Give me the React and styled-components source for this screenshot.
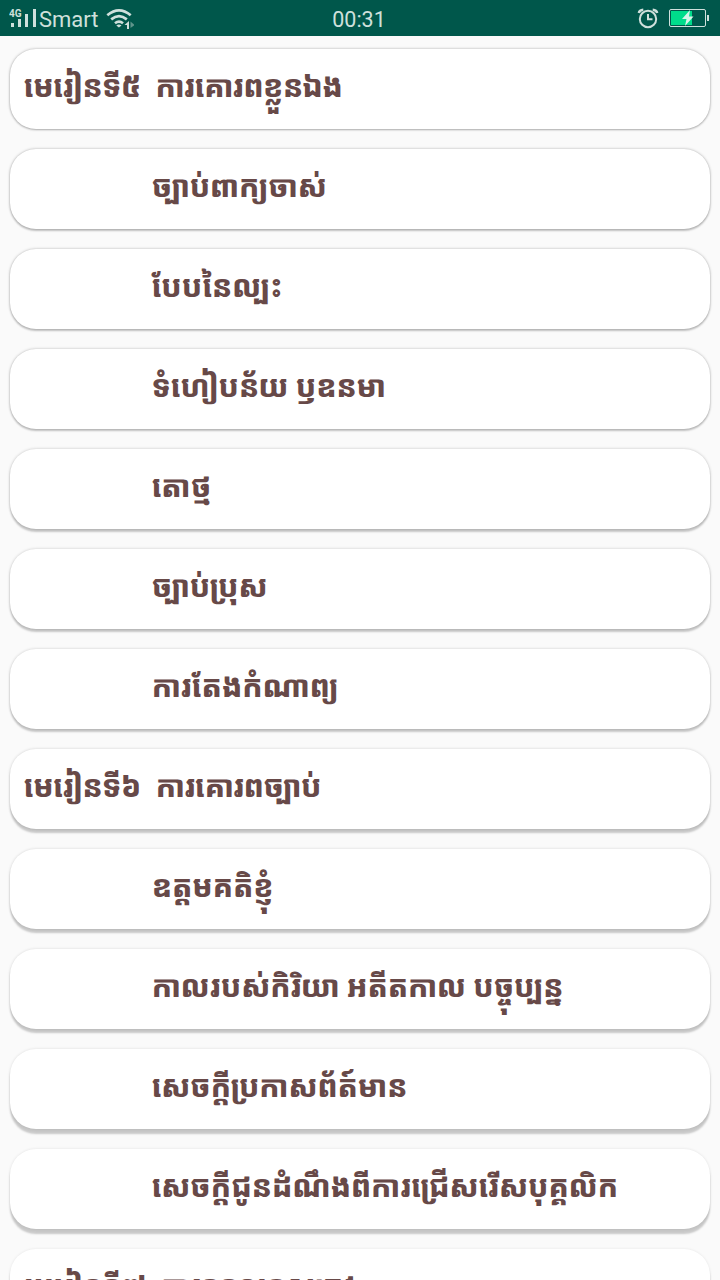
import React from 'react';
import styled, { createGlobalStyle } from 'styled-components';

const GlobalStyle = createGlobalStyle`
  body {
    margin: 0;
    background: #fafafa;
  }
`;

const Screen = styled.div`
  display: flex;
  flex-direction: column;
  width: 720px;
  height: 1280px;
  overflow: hidden;
  background: #fafafa;
`;

const StatusBar = styled.header`
  display: grid;
  grid-template-columns: 1fr auto 1fr;
  align-items: center;
  flex: 0 0 36px;
  height: 36px;
  padding: 0 11px 0 9px;
  box-sizing: border-box;
  background: #00574b;
  color: #cfe0dc;
  font-family: Roboto, sans-serif;
  font-size: 22px;
  line-height: 33px;
`;

const Left = styled.div`
  display: flex;
  align-items: center;
  height: 36px;
`;

const Right = styled(Left)`
  justify-content: flex-end;
  gap: 10px;
`;

const Carrier = styled.span`
  padding-top: 3px;
  margin: 0 7px 0 2px;
`;

const Clock = styled.span`
  padding-top: 3px;
  font-size: 21.5px;
`;

const List = styled.main`
  display: flex;
  flex-direction: column;
  gap: 20px;
  padding: 13px 10px 0;
`;

const Card = styled.div`
  display: flex;
  align-items: flex-start;
  flex: 0 0 80px;
  box-sizing: border-box;
  padding: 16px 14px 0 ${props => (props.$lesson ? 13.5 : 141.5)}px;
  border-radius: 26px;
  background: #fff;
  box-shadow:
    0 ${props => props.$drop}px 2px rgba(0, 0, 0, 0.2),
    0 0 3px rgba(0, 0, 0, ${props => props.$edge});
`;

const Label = styled.span`
  color: #674948;
  font-family: "Noto Sans Khmer", "Khmer OS", "Noto Sans", sans-serif;
  font-size: 30px;
  font-weight: 800;
  line-height: 41px;
  letter-spacing: ${props => (props.$lesson ? -0.95 : -0.53)}px;
  word-spacing: ${props => (props.$lesson ? 0.8 : 0)}px;
  white-space: pre;
`;

const SignalIcon = () => (
  <svg width="28" height="36" viewBox="9 0 28 36" fill="#cfe0dc">
    <text x="9" y="16.5" fontSize="10" fontWeight="700" fontFamily="Roboto, sans-serif">4G</text>
    <path d="M11 23h3v4h-3zM18 19h3v8h-3zM25 14h3v13h-3zM33 9h3v18h-3z" />
  </svg>
);

const WifiIcon = () => (
  <svg width="28" height="36" viewBox="106 0 28 36">
    <g fill="none" stroke="#cfe0dc" strokeWidth="2.7">
      <path d="M107.3 15.3q11.7-10 23.4 0" />
      <path d="M111.2 19.4q7.8-6.4 15.6 0" />
      <path d="M115 23.3q4-3.2 8 0" />
    </g>
    <path d="M116.3 25.4q2.6-2 5.2 0l-2.6 2.2z" fill="#cfe0dc" />
    <path d="M129 21v8h-2v-4h-2.5z" fill="#cfe0dc" />
    <path d="M130.5 21.500l4 3.500-4 3z" fill="#5f948b" />
  </svg>
);

const AlarmIcon = () => (
  <svg width="22" height="36" viewBox="637 0 22 36" fill="none" stroke="#cfe0dc" strokeWidth="2">
    <circle cx="648" cy="19" r="8.2" />
    <path d="M648 14v5.2h4.5" />
    <path d="M638.8 13q.5-3 4.5-3.3M657.2 13q-.5-3-4.5-3.3" strokeWidth="2.4" />
  </svg>
);

const BatteryIcon = () => (
  <svg width="40" height="36" viewBox="669 0 40 36">
    <rect x="669.5" y="9.5" width="36" height="17" rx="1.5" fill="none" stroke="#cfe0dc" />
    <path d="M671 11h21v14h-21z" fill="#00dc8b" />
    <path d="M707 15h2v6h-2z" fill="#cfe0dc" />
    <path d="M690 10l-8 9h4.5l-1.5 7 8.5-9.5h-4.5z" fill="#d8f5ea" />
  </svg>
);

const rows = [
  { lesson: true, text: 'មេរៀនទី៥  ការគោរពខ្លួនឯង' },
  { text: 'ច្បាប់ពាក្យចាស់' },
  { text: 'បែបនៃល្បះ' },
  { text: 'ទំហៀបន័យ ឫឧនមា' },
  { text: 'តោថ្ម' },
  { text: 'ច្បាប់ប្រុស' },
  { text: 'ការតែងកំណាព្យ' },
  { lesson: true, text: 'មេរៀនទី៦  ការគោរពច្បាប់' },
  { text: 'ឧត្តមគតិខ្ញុំ' },
  { text: 'កាលរបស់កិរិយា អតីតកាល បច្ចុប្បន្ន' },
  { text: 'សេចក្ដីប្រកាសព័ត៍មាន' },
  { text: 'សេចក្ដីជូនដំណឹងពីការជ្រើសរើសបុគ្គលិក' },
  { lesson: true, text: 'មេរៀនទី៧  ការទទួលខុសត្រូវ' },
];

const App = () => (
  <Screen>
    <GlobalStyle />
    <StatusBar>
      <Left>
        <SignalIcon />
        <Carrier>Smart</Carrier>
        <WifiIcon />
      </Left>
      <Clock>00:31</Clock>
      <Right>
        <AlarmIcon />
        <BatteryIcon />
      </Right>
    </StatusBar>
    <List>
      {/* the shadow drops further the lower a card sits on the screen */}
      {rows.map((row, i) => (
        <Card
          key={row.text}
          $lesson={row.lesson}
          $drop={1 + i * 0.32}
          $edge={0.29 - i * 0.017}
        >
          <Label $lesson={row.lesson}>{row.text}</Label>
        </Card>
      ))}
    </List>
  </Screen>
);

export default App;
